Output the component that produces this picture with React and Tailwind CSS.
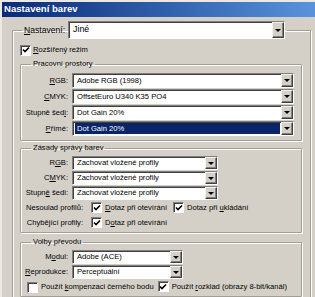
import React from "react";

function Arrow() {
  return (
    <span className="block w-0 h-0 border-x-[3px] border-t-[3px] border-x-transparent border-t-black" />
  );
}

function Combo({ value, width, height, selected, big }) {
  return (
    <div
      className="flex border border-t-[#808080] border-l-[#808080] border-b-white border-r-white"
      style={{ width, height }}
    >
      <div className="flex flex-1 min-w-0 bg-white shadow-[inset_1px_1px_0_#404040] p-[1px] pl-[2px]">
        <div
          className={
            "flex flex-1 items-center pl-[2px] truncate " +
            (selected ? "bg-[#0a246a] text-white" : "") +
            (big ? " text-[8.8px]" : "")
          }
        >
          {value}
        </div>
      </div>
      <div className="w-[12px] flex items-center justify-center bg-[#d4d0c8] border border-t-[#f4f2ee] border-l-[#f4f2ee] border-b-[#404040] border-r-[#404040] shadow-[inset_-1px_-1px_0_#808080]">
        <Arrow />
      </div>
    </div>
  );
}

function Check({ checked }) {
  return (
    <span className="w-[11px] h-[11px] shrink-0 bg-white border border-t-[#808080] border-l-[#808080] border-b-white border-r-white shadow-[inset_1px_1px_0_#404040] flex items-center justify-center">
      {checked && (
        <svg width="8" height="8" viewBox="0 0 8 8">
          <path d="M1 3.5 L3 5.5 L7 1.5" stroke="#000" strokeWidth="1.6" fill="none" />
        </svg>
      )}
    </span>
  );
}

function Group({ title, children, className }) {
  return (
    <fieldset
      className={
        "border border-[#a29e96] shadow-[inset_1px_1px_0_#fff,1px_1px_0_#fff] rounded-[1px] " +
        className
      }
    >
      <legend className="ml-[10px] px-[2px] leading-[12px]">{title}</legend>
      {children}
    </fieldset>
  );
}

function Row({ label, children, labelW = 47, h = 14 }) {
  return (
    <div className="flex items-center gap-[4px]" style={{ height: h }}>
      <span className="text-right shrink-0 whitespace-nowrap" style={{ width: labelW }}>
        {label}
      </span>
      {children}
    </div>
  );
}

export default function App() {
  return (
    <div className="w-[315px] h-[297px] overflow-hidden bg-[#d4d0c8] text-[7.6px] text-black font-['Liberation_Sans',Arial,sans-serif] border-t-2 border-l-2 border-[#ece9e2]">
      <div className="h-[15px] flex items-center pl-[2px] bg-gradient-to-r from-[#0a2a78] to-[#5a93dc] text-white font-bold text-[9.6px]">
        Nastavení barev
      </div>

      <fieldset className="mt-[4px] ml-[10px] w-[299px] h-[300px] border border-[#a29e96] shadow-[inset_1px_1px_0_#fff,1px_1px_0_#fff] pl-[7px] pr-[8px]">
        <legend className="ml-[2px] px-[2px] flex items-center gap-[3px] text-[8.6px]">
          <span>
            <u>N</u>astavení:
          </span>
          <Combo value="Jiné" width={217} height={18} big />
        </legend>

        <label className="mt-[5px] h-[12px] flex items-center gap-[2px]">
          <Check checked />
          <span>
            <u>R</u>ozšířený režim
          </span>
        </label>

        <Group title="Pracovní prostory" className="mt-[2px] pt-[3px] pb-[4px] pr-[6px]">
          <div className="flex flex-col gap-[1px]">
            <Row label={<><u>R</u>GB:</>} h={15}>
              <Combo value="Adobe RGB (1998)" width={222} height={15} />
            </Row>
            <Row label={<><u>C</u>MYK:</>} h={15}>
              <Combo value="OffsetEuro U340 K35 PO4" width={222} height={15} />
            </Row>
            <Row label={<>Stupně šed<u>i</u>:</>} h={15}>
              <Combo value="Dot Gain 20%" width={222} height={15} />
            </Row>
            <Row label={<><u>P</u>římé:</>} h={15}>
              <Combo value="Dot Gain 20%" width={222} height={15} selected />
            </Row>
          </div>
        </Group>

        <Group title="Zásady správy barev" className="mt-[1px] pt-[2px] pb-[2px]">
          <div className="flex flex-col gap-[1px]">
            <Row label={<>R<u>G</u>B:</>}>
              <Combo value="Zachovat vložené profily" width={146} height={14} />
            </Row>
            <Row label={<>C<u>M</u>YK:</>}>
              <Combo value="Zachovat vložené profily" width={146} height={14} />
            </Row>
            <Row label={<>Stupn<u>ě</u> šedi:</>}>
              <Combo value="Zachovat vložené profily" width={146} height={14} />
            </Row>
            <Row label="Nesoulad profilů:" labelW={62}>
              <span className="ml-[4px] flex items-center gap-[3px]">
                <Check checked />
                <span>
                  <u>D</u>otaz při otevírání
                </span>
              </span>
              <span className="ml-[2px] flex items-center gap-[3px]">
                <Check checked />
                <span>
                  Dotaz při <u>u</u>kládání
                </span>
              </span>
            </Row>
            <Row label="Chybějící profily:" labelW={62}>
              <span className="ml-[4px] flex items-center gap-[3px]">
                <Check checked />
                <span>
                  D<u>o</u>taz při otevírání
                </span>
              </span>
            </Row>
          </div>
        </Group>

        <Group title="Volby převodu" className="mt-[3px] pt-[2px] pb-[2px]">
          <div className="flex flex-col gap-[1px]">
            <Row label={<>M<u>o</u>dul:</>}>
              <Combo value="Adobe (ACE)" width={111} height={14} />
            </Row>
            <Row label={<><u>R</u>eprodukce:</>}>
              <Combo value="Perceptuální" width={111} height={14} />
            </Row>
            <div className="h-[14px] flex items-center pl-[6px]">
              <Check />
              <span className="ml-[3px]">
                Použít <u>k</u>ompenzaci černého bodu
              </span>
              <span className="ml-[4px] flex items-center gap-[3px]">
                <Check checked />
                <span>
                  Použít <u>r</u>ozklad (obrazy 8-bit/kanál)
                </span>
              </span>
            </div>
          </div>
        </Group>
      </fieldset>
    </div>
  );
}
